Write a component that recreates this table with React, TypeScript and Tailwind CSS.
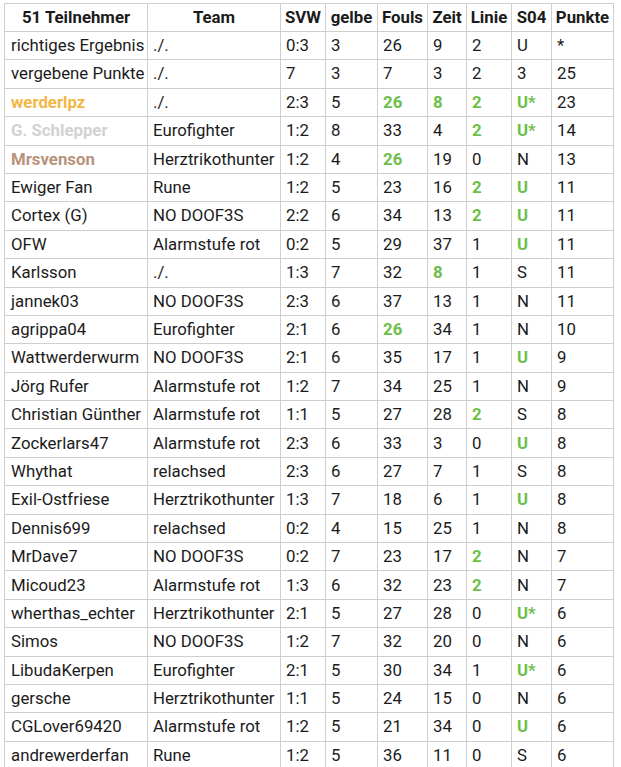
import React from "react";

type Tone = "orange" | "silver" | "bronze" | undefined;

interface Row {
    name: string;
    tone?: Tone;
    team: string;
    svw: string;
    gelbe: string;
    fouls: string;
    zeit: string;
    linie: string;
    s04: string;
    punkte: string;
    // which columns are highlighted green
    hits?: ("fouls" | "zeit" | "linie" | "s04")[];
}

const rows: Row[] = [
    { name: "richtiges Ergebnis", team: "./.", svw: "0:3", gelbe: "3", fouls: "26", zeit: "9", linie: "2", s04: "U", punkte: "*" },
    { name: "vergebene Punkte", team: "./.", svw: "7", gelbe: "3", fouls: "7", zeit: "3", linie: "2", s04: "3", punkte: "25" },
    { name: "werderlpz", tone: "orange", team: "./.", svw: "2:3", gelbe: "5", fouls: "26", zeit: "8", linie: "2", s04: "U*", punkte: "23", hits: ["fouls", "zeit", "linie", "s04"] },
    { name: "G. Schlepper", tone: "silver", team: "Eurofighter", svw: "1:2", gelbe: "8", fouls: "33", zeit: "4", linie: "2", s04: "U*", punkte: "14", hits: ["linie", "s04"] },
    { name: "Mrsvenson", tone: "bronze", team: "Herztrikothunter", svw: "1:2", gelbe: "4", fouls: "26", zeit: "19", linie: "0", s04: "N", punkte: "13", hits: ["fouls"] },
    { name: "Ewiger Fan", team: "Rune", svw: "1:2", gelbe: "5", fouls: "23", zeit: "16", linie: "2", s04: "U", punkte: "11", hits: ["linie", "s04"] },
    { name: "Cortex (G)", team: "NO DOOF3S", svw: "2:2", gelbe: "6", fouls: "34", zeit: "13", linie: "2", s04: "U", punkte: "11", hits: ["linie", "s04"] },
    { name: "OFW", team: "Alarmstufe rot", svw: "0:2", gelbe: "5", fouls: "29", zeit: "37", linie: "1", s04: "U", punkte: "11", hits: ["s04"] },
    { name: "Karlsson", team: "./.", svw: "1:3", gelbe: "7", fouls: "32", zeit: "8", linie: "1", s04: "S", punkte: "11", hits: ["zeit"] },
    { name: "jannek03", team: "NO DOOF3S", svw: "2:3", gelbe: "6", fouls: "37", zeit: "13", linie: "1", s04: "N", punkte: "11" },
    { name: "agrippa04", team: "Eurofighter", svw: "2:1", gelbe: "6", fouls: "26", zeit: "34", linie: "1", s04: "N", punkte: "10", hits: ["fouls"] },
    { name: "Wattwerderwurm", team: "NO DOOF3S", svw: "2:1", gelbe: "6", fouls: "35", zeit: "17", linie: "1", s04: "U", punkte: "9", hits: ["s04"] },
    { name: "Jörg Rufer", team: "Alarmstufe rot", svw: "1:2", gelbe: "7", fouls: "34", zeit: "25", linie: "1", s04: "N", punkte: "9" },
    { name: "Christian Günther", team: "Alarmstufe rot", svw: "1:1", gelbe: "5", fouls: "27", zeit: "28", linie: "2", s04: "S", punkte: "8", hits: ["linie"] },
    { name: "Zockerlars47", team: "Alarmstufe rot", svw: "2:3", gelbe: "6", fouls: "33", zeit: "3", linie: "0", s04: "U", punkte: "8", hits: ["s04"] },
    { name: "Whythat", team: "relachsed", svw: "2:3", gelbe: "6", fouls: "27", zeit: "7", linie: "1", s04: "S", punkte: "8" },
    { name: "Exil-Ostfriese", team: "Herztrikothunter", svw: "1:3", gelbe: "7", fouls: "18", zeit: "6", linie: "1", s04: "U", punkte: "8", hits: ["s04"] },
    { name: "Dennis699", team: "relachsed", svw: "0:2", gelbe: "4", fouls: "15", zeit: "25", linie: "1", s04: "N", punkte: "8" },
    { name: "MrDave7", team: "NO DOOF3S", svw: "0:2", gelbe: "7", fouls: "23", zeit: "17", linie: "2", s04: "N", punkte: "7", hits: ["linie"] },
    { name: "Micoud23", team: "Alarmstufe rot", svw: "1:3", gelbe: "6", fouls: "32", zeit: "23", linie: "2", s04: "N", punkte: "7", hits: ["linie"] },
    { name: "wherthas_echter", team: "Herztrikothunter", svw: "2:1", gelbe: "5", fouls: "27", zeit: "28", linie: "0", s04: "U*", punkte: "6", hits: ["s04"] },
    { name: "Simos", team: "NO DOOF3S", svw: "1:2", gelbe: "7", fouls: "32", zeit: "20", linie: "0", s04: "N", punkte: "6" },
    { name: "LibudaKerpen", team: "Eurofighter", svw: "2:1", gelbe: "5", fouls: "30", zeit: "34", linie: "1", s04: "U*", punkte: "6", hits: ["s04"] },
    { name: "gersche", team: "Herztrikothunter", svw: "1:1", gelbe: "5", fouls: "24", zeit: "15", linie: "0", s04: "N", punkte: "6" },
    { name: "CGLover69420", team: "Alarmstufe rot", svw: "1:2", gelbe: "5", fouls: "21", zeit: "34", linie: "0", s04: "U", punkte: "6", hits: ["s04"] },
    { name: "andrewerderfan", team: "Rune", svw: "1:2", gelbe: "5", fouls: "36", zeit: "11", linie: "0", s04: "S", punkte: "6" },
];

const headers = ["51 Teilnehmer", "Team", "SVW", "gelbe", "Fouls", "Zeit", "Linie", "S04", "Punkte"];
const widths = ["w-[143px]", "w-[133px]", "w-[45px]", "w-[52px]", "w-[50px]", "w-[39px]", "w-[45px]", "w-[40px]", "w-[62px]"];

const nameTone = (tone: Tone) => {
    if (tone === "orange") return "font-bold text-[#f2b744]";
    if (tone === "silver") return "font-bold text-[#d2d2d2]";
    if (tone === "bronze") return "font-bold text-[#b8927a]";
    return "";
};

function Cell({ children, hit }: { children: React.ReactNode; hit?: boolean }) {
    return (
        <td className={`border border-[#cfcfcf] px-[5px] whitespace-nowrap ${hit ? "font-bold text-[#6cc04a]" : ""}`}>
            {children}
        </td>
    );
}

export default function App() {
    return (
        <div className="bg-white min-h-[767px] pt-[3px] pl-[4px]" style={{ fontFamily: "Roboto, 'Noto Sans', sans-serif" }}>
            <table className="table-fixed border-collapse text-[16.8px] text-[#1b1b1b] w-[608px]">
                <colgroup>
                    {widths.map((w, i) => (
                        <col key={i} className={w} />
                    ))}
                </colgroup>
                <thead>
                    <tr className="h-[28px]">
                        {headers.map(h => (
                            <th key={h} className="border border-[#cfcfcf] px-[2px] font-bold text-center whitespace-nowrap">
                                {h}
                            </th>
                        ))}
                    </tr>
                </thead>
                <tbody>
                    {rows.map(r => {
                        const hit = (k: "fouls" | "zeit" | "linie" | "s04") => r.hits?.includes(k);
                        return (
                            <tr key={r.name} className="h-[28.4px]">
                                <td className={`border border-[#cfcfcf] px-[6px] whitespace-nowrap ${nameTone(r.tone)}`}>{r.name}</td>
                                <Cell>{r.team}</Cell>
                                <Cell>{r.svw}</Cell>
                                <Cell>{r.gelbe}</Cell>
                                <Cell hit={hit("fouls")}>{r.fouls}</Cell>
                                <Cell hit={hit("zeit")}>{r.zeit}</Cell>
                                <Cell hit={hit("linie")}>{r.linie}</Cell>
                                <Cell hit={hit("s04")}>{r.s04}</Cell>
                                <Cell>{r.punkte}</Cell>
                            </tr>
                        );
                    })}
                </tbody>
            </table>
        </div>
    );
}
